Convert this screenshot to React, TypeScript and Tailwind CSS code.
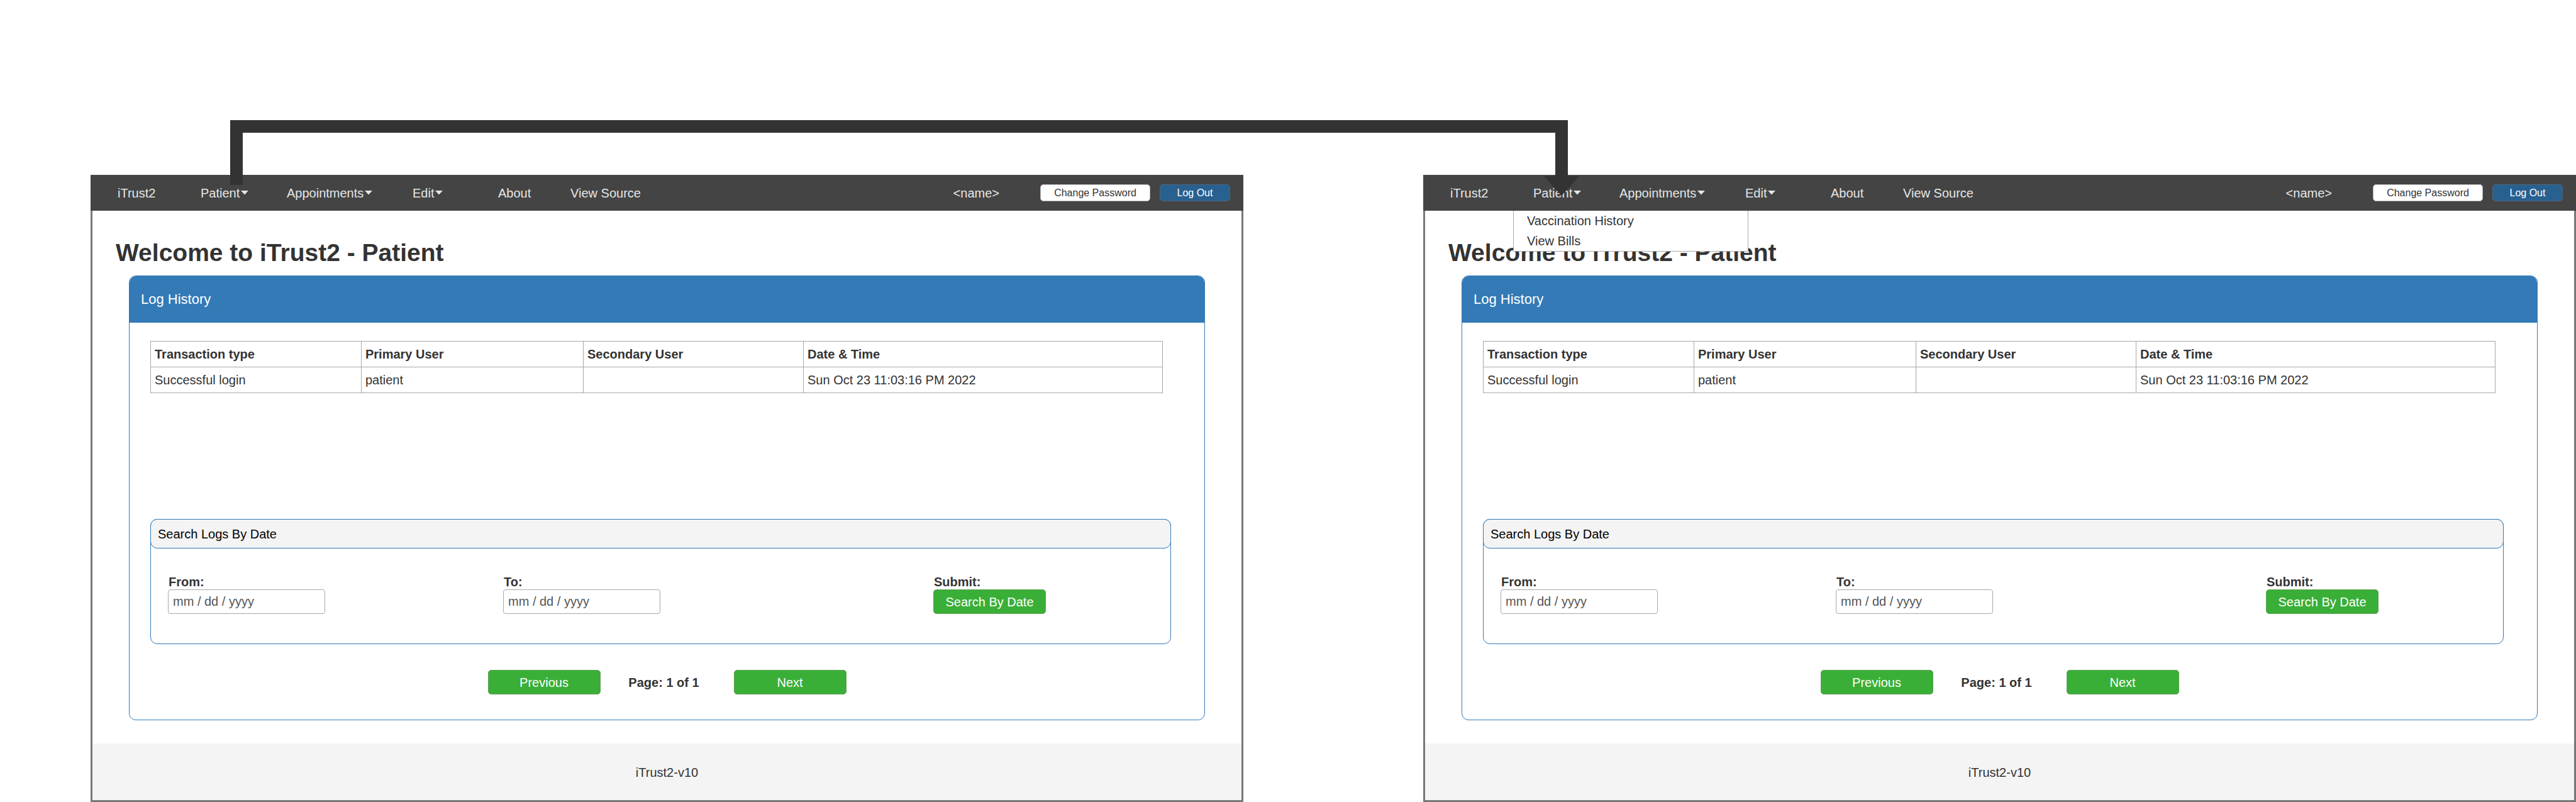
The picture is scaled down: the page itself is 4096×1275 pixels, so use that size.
const navMenus = ["Patient", "Appointments", "Edit"];
const columns = ["Transaction type", "Primary User", "Secondary User", "Date & Time"];
const row = ["Successful login", "patient", "", "Sun Oct 23 11:03:16 PM 2022"];

const greenButton =
  "h-[39px] w-[179px] rounded-[5px] border border-[#5e9f58] bg-[#3aaf37] text-center text-white";

function Caret() {
  return (
    <svg className="h-[7px] w-3" viewBox="0 0 12 7" aria-hidden="true">
      <path d="M0 0H12L6 6.5Z" fill="#e6e6e6" />
    </svg>
  );
}

function NavBar({ menuOpen }: { menuOpen: boolean }) {
  return (
    <nav className="relative flex h-[57px] items-center bg-[#444] pr-[21px] pl-[43px] text-[#e6e6e6]">
      <div className="grid grid-cols-[132px_137px_200px_136px_115px_auto] items-center">
        <a href="#home">iTrust2</a>
        {navMenus.map((name) => (
          <button
            key={name}
            type="button"
            aria-haspopup="menu"
            aria-expanded={menuOpen && name === "Patient"}
            className="flex items-center gap-[2px]"
          >
            {name}
            <Caret />
          </button>
        ))}
        <a href="#about">About</a>
        <a href="#source">View Source</a>
      </div>
      <div className="ml-auto flex items-center gap-[15px]">
        <span className="mr-[50px]">&lt;name&gt;</span>
        <button
          type="button"
          className="h-[27px] w-[175px] rounded-[5px] border border-[#b5b5b5] bg-white text-base leading-none text-[#333]"
        >
          Change Password
        </button>
        <button
          type="button"
          className="h-[27px] w-[112px] rounded-[5px] border border-[#4a6780] bg-[#286090] text-base leading-none text-white"
        >
          Log Out
        </button>
      </div>
      {menuOpen && (
        <ul className="absolute top-full left-[143px] w-[374px] border-x border-b border-[#a8a8a8] bg-white pl-[21px] leading-8 text-[#333]">
          <li>
            <a href="#vaccinations">Vaccination History</a>
          </li>
          <li>
            <a href="#bills">View Bills</a>
          </li>
        </ul>
      )}
    </nav>
  );
}

function DateField({ id, label }: { id: string; label: string }) {
  return (
    <div className="flex flex-col">
      <label htmlFor={id} className="pl-[1px] font-bold leading-6">
        {label}
      </label>
      <input
        id={id}
        type="text"
        placeholder="mm / dd / yyyy"
        className="h-[39px] w-[250px] rounded-[4px] border border-[#a8a8a8] bg-white px-[7px] placeholder:text-[#555]"
      />
    </div>
  );
}

function SearchLogs({ prefix }: { prefix: string }) {
  return (
    <section className="mr-[53px] ml-[33px] h-[199px] rounded-[11px] border border-[#337ab7]">
      <h2 className="-mx-px -mt-px flex h-[47px] items-center rounded-[11px] border border-[#337ab7] bg-[#f4f4f4] pl-[11px] text-black">
        Search Logs By Date
      </h2>
      <form className="mt-[41px] grid grid-cols-[533px_684px_auto] pl-[27px]">
        <DateField id={`${prefix}-from`} label="From:" />
        <DateField id={`${prefix}-to`} label="To:" />
        <div className="flex flex-col">
          <label htmlFor={`${prefix}-submit`} className="pl-[1px] font-bold leading-6">
            Submit:
          </label>
          <button id={`${prefix}-submit`} type="button" className={greenButton}>
            Search By Date
          </button>
        </div>
      </form>
    </section>
  );
}

function LogPanel({ prefix }: { prefix: string }) {
  return (
    <section className="mx-[58px] overflow-hidden rounded-[11px] border border-[#337ab7] pb-[40px]">
      <h2 className="flex h-[74px] items-center bg-[#337ab7] pl-[18px] text-[22px] text-white">
        Log History
      </h2>
      <div className="h-[312px] pt-[29px] pr-[66px] pl-[33px]">
        <table className="w-full table-fixed border-collapse text-left">
          <colgroup>
            <col className="w-[335px]" />
            <col className="w-[353px]" />
            <col className="w-[350px]" />
            <col />
          </colgroup>
          <thead>
            <tr>
              {columns.map((name) => (
                <th key={name} className="h-[41px] border border-[#a8a8a8] py-0 pl-[6px] font-bold">
                  {name}
                </th>
              ))}
            </tr>
          </thead>
          <tbody>
            <tr>
              {row.map((value, i) => (
                <td key={columns[i]} className="h-[41px] border border-[#a8a8a8] py-0 pl-[6px]">
                  {value}
                </td>
              ))}
            </tr>
          </tbody>
        </table>
      </div>
      <SearchLogs prefix={prefix} />
      <div className="mt-[41px] flex items-center justify-center">
        <button type="button" className={greenButton}>
          Previous
        </button>
        <span className="w-[212px] pr-[10px] text-center font-bold">Page: 1 of 1</span>
        <button type="button" className={greenButton}>
          Next
        </button>
      </div>
    </section>
  );
}

function Screen({ id, menuOpen = false }: { id: string; menuOpen?: boolean }) {
  return (
    <div className="flex min-w-0 flex-1 flex-col">
      <NavBar menuOpen={menuOpen} />
      <div className="flex flex-1 flex-col border-x-3 border-b-3 border-[#777]">
        <main>
          <h1 className="pt-[44px] pb-[13px] pl-[37px] text-[39px] leading-[46px] font-bold">
            Welcome to iTrust2 - Patient
          </h1>
          <LogPanel prefix={id} />
        </main>
        <footer className="mt-[37px] flex flex-1 items-center justify-center bg-[#f4f4f4] pt-[2px]">
          iTrust2-v10
        </footer>
      </div>
    </div>
  );
}

function Connector() {
  return (
    <svg
      className="pointer-events-none absolute top-[191px] left-[366px] h-[120px] w-[2145px]"
      viewBox="0 0 2145 120"
      aria-hidden="true"
    >
      <path
        d="M0 0H2127V89H2145L2117 120L2089 89H2107V20H20V103H0Z"
        fill="#333"
      />
    </svg>
  );
}

export default function App() {
  return (
    <div
      className="relative flex min-h-screen gap-[286px] bg-white pt-[278px] pl-[144px] text-[20px] leading-6 text-[#333]"
      style={{ fontFamily: '"Liberation Sans", Arial, sans-serif' }}
    >
      <Screen id="closed" />
      <Screen id="open" menuOpen />
      <Connector />
    </div>
  );
}
